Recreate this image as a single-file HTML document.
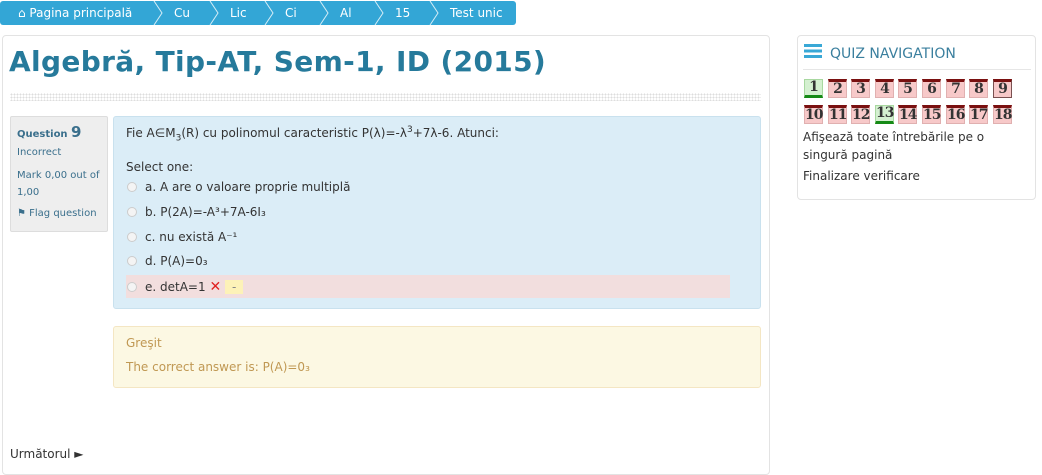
<!DOCTYPE html>
<html><head><meta charset="utf-8"><style>
*{box-sizing:border-box;margin:0;padding:0}
body{width:1042px;height:469px;background:#fff;font-family:"DejaVu Sans","Liberation Sans",sans-serif;font-size:12px;color:#333;position:relative;overflow:hidden}
.bc{position:absolute;left:0;top:1px;width:516px;height:24px;background:#33a6d6;border-radius:3px;color:#fff;font-size:12px}
.bc span{position:absolute;top:5px}
.main{position:absolute;left:2px;top:35px;width:768px;height:440px;border:1px solid #e3e3e3;border-radius:4px}
h1{position:absolute;left:9px;top:45px;font-size:28px;color:#267a9b;font-weight:bold;letter-spacing:0.35px}
.dots{position:absolute;left:10px;top:93px;width:751px;height:8px;background-image:radial-gradient(#ddd 0.8px,transparent 1px);background-size:3px 3px}
.info{position:absolute;left:10px;top:116px;width:98px;height:116px;background:#eee;border:1px solid #ddd;border-radius:2px;font-size:10px;color:#3a6f8c;padding:6px}
.q{position:absolute;left:113px;top:116px;width:648px;height:193px;background:#dbedf7;border:1px solid #c9e1ee;border-radius:3px;font-size:12px}
.opt{position:absolute;left:13px}
.rad{display:inline-block;width:10px;height:10px;border-radius:50%;border:1px solid #ccc;background:#f4f4f4;margin-right:8px;vertical-align:-1px}
.fb{position:absolute;left:113px;top:326px;width:648px;height:62px;background:#fcf8e3;border:1px solid #f4e6c3;border-radius:3px;color:#c09853;font-size:12px}
.nav{position:absolute;left:797px;top:35px;width:239px;height:165px;border:1px solid #e3e3e3;border-radius:4px}
.b{position:absolute;width:19px;height:19px;background:#f7c9c9;border:1px solid #e0b0b0;border-top:3px solid #7a1010;font:bold 14px "DejaVu Serif","Liberation Serif",serif;color:#333;text-align:center;line-height:15px;letter-spacing:-1px}
.b.g{background:#d4f0d0;border:1px solid #a8d8a0;border-bottom:3px solid #168a16}
</style></head><body>
<div class="bc">
<span style="left:18px">&#8962; Pagina principală</span>
<span style="left:174px">Cu</span><span style="left:230px">Lic</span><span style="left:285px">Ci</span><span style="left:340px">Al</span><span style="left:395px">15</span><span style="left:450px">Test unic</span>
<svg style="position:absolute;left:0;top:0" width="516" height="24"><g fill="none" stroke="#fff" stroke-width="1" opacity="0.8">
<path d="M154 0 L162 12 L154 24"/><path d="M210 0 L218 12 L210 24"/><path d="M265 0 L273 12 L265 24"/><path d="M320 0 L328 12 L320 24"/><path d="M375 0 L383 12 L375 24"/><path d="M430 0 L438 12 L430 24"/></g></svg>
</div>
<div class="main"></div>
<h1>Algebră, Tip-AT, Sem-1, ID (2015)</h1>
<div class="dots"></div>
<div class="info"><div style="font-weight:bold;font-size:10px">Question <span style="font-size:15px">9</span></div>
<div style="margin-top:6px">Incorrect</div><div style="margin-top:9px;line-height:17px">Mark 0,00 out of 1,00</div><div style="margin-top:7px">&#9873; Flag question</div></div>
<div class="q">
<div style="position:absolute;left:12px;top:8px">Fie A∈M<sub style="font-size:9px">3</sub>(R) cu polinomul caracteristic P(λ)=-λ<sup style="font-size:9px">3</sup>+7λ-6. Atunci:</div>
<div style="position:absolute;left:12px;top:43px">Select one:</div>
<div class="opt" style="top:63px"><span class="rad"></span>a. A are o valoare proprie multiplă</div>
<div class="opt" style="top:88px"><span class="rad"></span>b. P(2A)=-A³+7A-6I₃</div>
<div class="opt" style="top:113px"><span class="rad"></span>c. nu există A⁻¹</div>
<div class="opt" style="top:137px"><span class="rad"></span>d. P(A)=0₃</div>
<div style="position:absolute;left:12px;top:158px;width:604px;height:23px;background:#f2dede"></div>
<div class="opt" style="top:162px"><span class="rad"></span>e. detA=1 <span style="color:#e02020;font-weight:bold;font-size:14px">✕</span> <span style="background:#fdf2b8;padding:0 7px;color:#888">-</span></div>
</div>
<div class="fb"><div style="position:absolute;left:12px;top:9px">Greşit</div><div style="position:absolute;left:12px;top:33px">The correct answer is: P(A)=0₃</div></div>
<div style="position:absolute;left:10px;top:447px;font-size:12px">Următorul ►</div>
<div class="nav">
<div style="position:absolute;left:6px;top:8px;width:18px;height:14px;background:repeating-linear-gradient(#39a8d6 0 3px,transparent 3px 5.5px)"></div>
<div style="position:absolute;left:32px;top:10px;font-size:14px;color:#3a7f9e">QUIZ NAVIGATION</div>
<div style="position:absolute;left:5px;top:33px;width:228px;border-top:1px solid #e6e6e6"></div>
<div class="b g" style="left:6px;top:43px">1</div>
<div class="b" style="left:30px;top:43px">2</div><div class="b" style="left:53px;top:43px">3</div><div class="b" style="left:77px;top:43px">4</div><div class="b" style="left:100px;top:43px">5</div><div class="b" style="left:124px;top:43px">6</div><div class="b" style="left:148px;top:43px">7</div><div class="b" style="left:171px;top:43px">8</div><div class="b" style="left:195px;top:43px;border-color:#7a5050;border-top-color:#7a1010">9</div>
<div class="b" style="left:6px;top:69px">10</div><div class="b" style="left:30px;top:69px">11</div><div class="b" style="left:53px;top:69px">12</div><div class="b g" style="left:77px;top:69px">13</div><div class="b" style="left:100px;top:69px">14</div><div class="b" style="left:124px;top:69px">15</div><div class="b" style="left:148px;top:69px">16</div><div class="b" style="left:171px;top:69px">17</div><div class="b" style="left:195px;top:69px">18</div>
<div style="position:absolute;left:5px;top:92px;line-height:18px;width:220px">Afişează toate întrebările pe o singură pagină</div>
<div style="position:absolute;left:5px;top:133px">Finalizare verificare</div>
</div>
</body></html>
